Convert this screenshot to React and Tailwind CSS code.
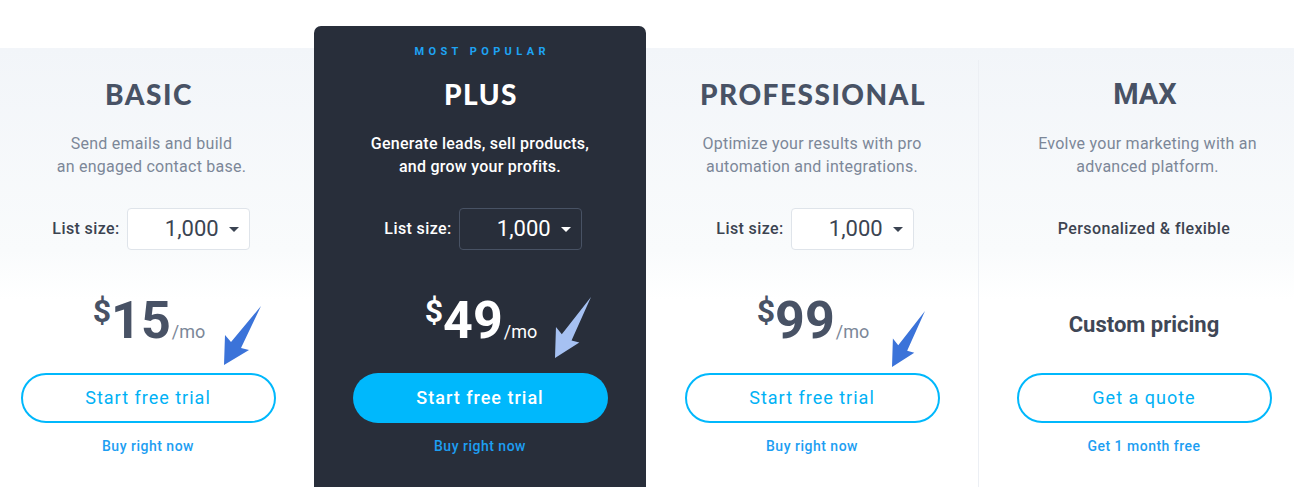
import React from 'react';

const PLANS = [
  {
    name: 'BASIC',
    desc: ['Send emails and build', 'an engaged contact base.'],
    descShift: 'pl-[7px]',
    price: '15',
    cta: 'Start free trial',
    link: 'Buy right now',
    arrow: 'left-[242px] top-[11px] w-[37px] h-[59px]',
  },
  {
    name: 'PLUS',
    popular: true,
    desc: ['Generate leads, sell products,', 'and grow your profits.'],
    descShift: '',
    price: '49',
    cta: 'Start free trial',
    link: 'Buy right now',
    arrow: 'left-[241px] top-[2px] w-[36px] h-[61px]',
  },
  {
    name: 'PROFESSIONAL',
    desc: ['Optimize your results with pro', 'automation and integrations.'],
    descShift: '',
    price: '99',
    cta: 'Start free trial',
    link: 'Buy right now',
    arrow: 'left-[246px] top-[16px] w-[33px] h-[56px]',
  },
  {
    name: 'MAX',
    desc: ['Evolve your marketing with an', 'advanced platform.'],
    descShift: 'pl-[7px]',
    custom: true,
    cta: 'Get a quote',
    link: 'Get 1 month free',
  },
];

function Arrow({ className, dark }) {
  return (
    <svg viewBox="0 0 37 59" className={`absolute ${className}`} preserveAspectRatio="none">
      <polygon points="37,0 17,42 25,44 0,59 1,29 7,36" fill={dark ? '#a6c1f2' : '#3b73d9'} />
    </svg>
  );
}

function Caret({ dark }) {
  return (
    <svg viewBox="0 0 10 5" className="w-[10px] h-[5px]">
      <polygon points="0,0 10,0 5,5" fill={dark ? '#ffffff' : '#3b4452'} />
    </svg>
  );
}

function PlanColumn({ plan, last }) {
  const dark = plan.popular;
  return (
    <div
      className={`relative w-[332px] flex flex-col items-center pt-[19px] pb-[60px] ${
        dark ? 'bg-[#282e3a] rounded-t-[7px]' : ''
      } ${last ? 'before:absolute before:left-0 before:top-[34px] before:bottom-0 before:w-px before:bg-[#eceff4]' : ''}`}
    >
      <div className="h-[14px] text-[11px] leading-[14px] font-bold tracking-[0.4em] text-[#1ea3f3] pl-[0.4em]">
        {dark ? 'MOST POPULAR' : ''}
      </div>
      {plan.name === 'MAX' ? (
        <h2 className="mt-[18px] pl-[2px] text-[29px] leading-[34px] font-bold text-[#485265]">{plan.name}</h2>
      ) : (
        <h2
          className={`mt-[18px] pl-[2px] text-[28px] leading-[34px] font-black tracking-[1.5px] font-['Lato',sans-serif] ${
            dark ? 'text-white' : 'text-[#485265]'
          }`}
        >
          {plan.name}
        </h2>
      )}
      <p
        className={`mt-[21px] text-[16px] leading-[23px] text-center tracking-[0.25px] ${plan.descShift} ${
          dark ? 'text-white font-medium' : 'text-[#7c8798]'
        }`}
      >
        {plan.desc[0]}
        <br />
        {plan.desc[1]}
      </p>

      {plan.custom ? (
        <div className="mt-[30px] h-[42px] flex items-center text-[16px] font-medium tracking-[0.4px] text-[#3d4451]">
          Personalized &amp; flexible
        </div>
      ) : (
        <div className="mt-[30px] ml-[6px] h-[42px] flex items-center gap-[7px]">
          <span className={`text-[16px] font-medium tracking-[0.4px] ${dark ? 'text-white' : 'text-[#3b4350]'}`}>
            List size:
          </span>
          <div
            className={`w-[123px] h-[42px] rounded-[4px] border flex items-center justify-end gap-[10px] pr-[10px] ${
              dark ? 'border-[#485264] bg-[#282e3a]' : 'border-[#dfe4ea] bg-white'
            }`}
          >
            <span className={`text-[22px] leading-none ${dark ? 'text-white' : 'text-[#3b4452]'}`}>1,000</span>
            <Caret dark={dark} />
          </div>
        </div>
      )}

      <div className="relative mt-[45px] h-[53px] w-full flex justify-center">
        {plan.custom ? (
          <div className="pt-[17px] text-[22px] leading-[26px] font-bold text-[#3f4756]">Custom pricing</div>
        ) : (
          <>
            <div className={`flex items-baseline pl-[2px] ${dark ? 'text-white' : 'text-[#485265]'}`}>
              <span className="self-start text-[32px] leading-none font-bold">$</span>
              <span className="text-[52px] leading-none font-bold">{plan.price}</span>
              <span className={`text-[18px] leading-none ml-[1px] ${dark ? 'text-white' : 'text-[#7c8798]'}`}>/mo</span>
            </div>
            <Arrow className={plan.arrow} dark={dark} />
          </>
        )}
      </div>

      <button
        type="button"
        className={`mt-[25px] w-[255px] h-[50px] rounded-full text-[18px] tracking-[1px] leading-none pb-[1px] ${
          dark
            ? 'bg-[#00b8fc] text-white font-medium'
            : 'border-2 border-[#00b8fc] bg-white text-[#00b1f5]'
        }`}
      >
        {plan.cta}
      </button>
      <a className="mt-[13px] text-[14px] leading-[20px] font-medium tracking-[0.5px] text-[#1d9ef2]">{plan.link}</a>
    </div>
  );
}

export default function App() {
  return (
    <div className="h-[487px] overflow-hidden bg-[linear-gradient(to_bottom,#ffffff_48px,#f2f5f9_48px,#f9fbfc_250px,#ffffff_300px)] font-['Roboto',sans-serif]">
      <div className="flex justify-center pt-[26px]">
        <div className="w-[1330px] shrink-0 flex">
          {PLANS.map((plan, i) => (
            <PlanColumn key={plan.name} plan={plan} last={i === PLANS.length - 1} />
          ))}
        </div>
      </div>
    </div>
  );
}
